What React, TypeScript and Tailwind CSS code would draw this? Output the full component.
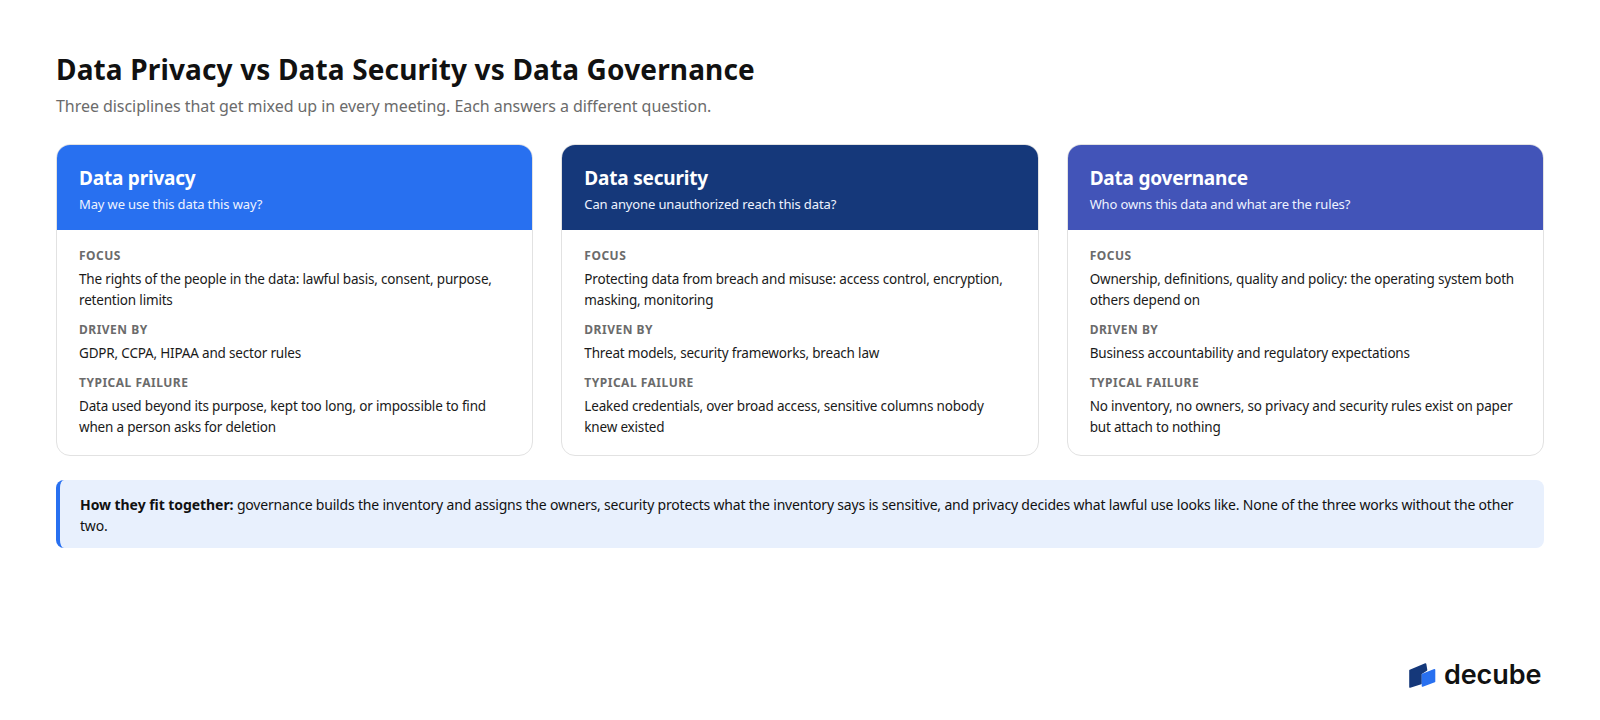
const font = "font-['Noto_Sans','Open_Sans',sans-serif]";

type Card = {
  title: string;
  sub: string;
  header: string;
  focus: string;
  driven: string;
  failure: string;
};

const cards: Card[] = [
  {
    title: "Data privacy",
    sub: "May we use this data this way?",
    header: "bg-[#2870f0]",
    focus: "The rights of the people in the data: lawful basis, consent, purpose, retention limits",
    driven: "GDPR, CCPA, HIPAA and sector rules",
    failure: "Data used beyond its purpose, kept too long, or impossible to find when a person asks for deletion",
  },
  {
    title: "Data security",
    sub: "Can anyone unauthorized reach this data?",
    header: "bg-[#15387a]",
    focus: "Protecting data from breach and misuse: access control, encryption, masking, monitoring",
    driven: "Threat models, security frameworks, breach law",
    failure: "Leaked credentials, over broad access, sensitive columns nobody knew existed",
  },
  {
    title: "Data governance",
    sub: "Who owns this data and what are the rules?",
    header: "bg-[#4254b8]",
    focus: "Ownership, definitions, quality and policy: the operating system both others depend on",
    driven: "Business accountability and regulatory expectations",
    failure: "No inventory, no owners, so privacy and security rules exist on paper but attach to nothing",
  },
];

function Section({ label, text }: { label: string; text: string }) {
  return (
    <div className="mb-[11px] last:mb-0">
      <div className="text-[12px] leading-[16px] font-bold tracking-[0.5px] text-[#6b6b6b] uppercase mb-[5px]">{label}</div>
      <div className="text-[13.5px] leading-[21px] text-[#1a1a1a] tracking-[-0.18px]">{text}</div>
    </div>
  );
}

export default function App() {
  return (
    <div className={`${font} relative w-[1600px] h-[720px] bg-white overflow-hidden px-[56px] pt-[48px]`}>
      <h1 className="text-[28px] leading-[42px] font-bold text-[#111111] tracking-[0.15px]">Data Privacy vs Data Security vs Data Governance</h1>
      <p className="text-[16px] leading-[24px] text-[#6b6b6b] mt-[4px] tracking-[-0.05px]">Three disciplines that get mixed up in every meeting. Each answers a different question.</p>
      <div className="grid grid-cols-3 gap-[28px] mt-[26px]">
        {cards.map((c) => (
          <div key={c.title} className="rounded-[14px] border border-[#e2e2e2] overflow-hidden bg-white">
            <div className={`${c.header} -mx-px -mt-px px-[23px] pt-[20px] h-[86px]`}>
              <div className="text-[19px] leading-[28px] font-bold text-white tracking-[-0.2px]">{c.title}</div>
              <div className="text-[13px] leading-[20px] mt-[2px] text-[#eef3ff] tracking-[-0.13px]">{c.sub}</div>
            </div>
            <div className="px-[22px] pt-[18px] pb-[17px]">
              <Section label="Focus" text={c.focus} />
              <Section label="Driven by" text={c.driven} />
              <Section label="Typical failure" text={c.failure} />
            </div>
          </div>
        ))}
      </div>
      <div className="mt-[24px] rounded-[8px] border-l-4 border-[#2870f0] bg-[#e8f0fd] pl-[20px] pr-[20px] pt-[14px] pb-[12px] text-[14px] leading-[21px] text-[#111111] tracking-[-0.19px]">
        <strong className="font-bold tracking-[-0.06px]">How they fit together:</strong> governance builds the inventory and assigns the owners, security protects what the inventory says is sensitive, and privacy decides what lawful use looks like. None of the three works without the other two.
      </div>
      <div className="absolute left-[1409px] top-[660px] flex items-center gap-[8px]">
        <svg width="27" height="25" viewBox="0 0 27 25">
          <path d="M1 7.5 L16.5 1 L17.5 7 L12 10.5 V20.5 L1 24 Z" fill="#15387a" stroke="#15387a" strokeWidth="1.6" strokeLinejoin="round" />
          <path d="M13.5 11.5 L25.5 6.8 V18.5 L13.5 23 Z" fill="#2870f0" stroke="#2870f0" strokeWidth="1.6" strokeLinejoin="round" />
        </svg>
        <span className="font-['Inter',sans-serif] text-[27px] leading-[30px] font-semibold text-[#111111] tracking-[-0.1px]">decube</span>
      </div>
    </div>
  );
}
